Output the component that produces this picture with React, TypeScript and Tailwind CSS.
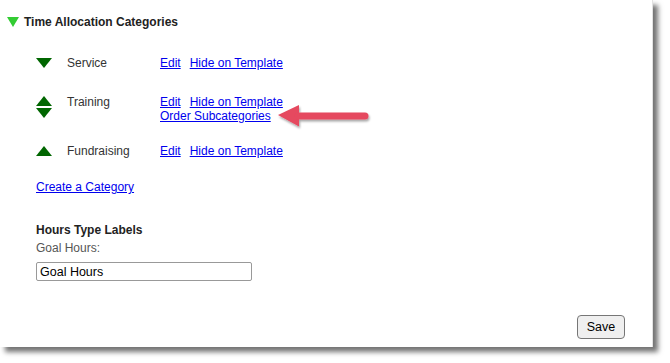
import React from 'react'

const font = { fontFamily: '"Liberation Sans", Arial, sans-serif' }

const Down = ({ color = '#006600', w = 16 }: { color?: string; w?: number }) => (
   <svg width={w} height="10" viewBox={`0 0 ${w} 10`} className="block">
      <polygon points={`0,0 ${w},0 ${w / 2},10`} fill={color} />
   </svg>
)

const Up = ({ color = '#006600' }: { color?: string }) => (
   <svg width="16" height="10" viewBox="0 0 16 10" className="block">
      <polygon points="8,0 16,10 0,10" fill={color} />
   </svg>
)

const Links = ({ extra }: { extra?: boolean }) => (
   <div className="flex flex-col leading-[14px]">
      <div className="flex gap-[9px]">
         <a href="#" className="text-[#0000ee] underline">Edit</a>
         <a href="#" className="text-[#0000ee] underline">Hide on Template</a>
      </div>
      {extra && (
         <a href="#" className="text-[#0000ee] underline">Order Subcategories</a>
      )}
   </div>
)

export default function App() {
   return (
      <div className="w-[670px] h-[363px] bg-white text-[12px]" style={font}>
         <div className="relative w-[653px] h-[347px] bg-white border-r border-[#e2e2e2] shadow-[5px_5px_5px_rgba(0,0,0,0.55)]">
            <div className="flex items-center gap-[5px] pl-[7px] pt-[15px]">
               <Down color="#33cc33" w={12} />
               <span className="font-bold text-[#222] leading-[14px]">Time Allocation Categories</span>
            </div>

            <div className="pl-[36px] pt-[27px] text-[#333]">
               <div className="flex items-start">
                  <div className="w-[31px] pt-[2px]"><Down /></div>
                  <div className="w-[93px] leading-[14px]">Service</div>
                  <Links />
               </div>
               <div className="flex items-start mt-[25px]">
                  <div className="w-[31px] pt-[1px] flex flex-col gap-[2px]">
                     <Up />
                     <Down />
                  </div>
                  <div className="w-[93px] leading-[14px]">Training</div>
                  <Links extra />
               </div>
               <div className="flex items-start mt-[21px]">
                  <div className="w-[31px] pt-[2px]"><Up /></div>
                  <div className="w-[93px] leading-[14px]">Fundraising</div>
                  <Links />
               </div>

               <a href="#" className="block mt-[22px] leading-[14px] text-[#0000ee] underline">Create a Category</a>

               <div className="mt-[29px] font-bold text-[#222] leading-[14px]">Hours Type Labels</div>
               <div className="mt-[4px] text-[#555] leading-[14px]">Goal Hours:</div>
               <input
                  defaultValue="Goal Hours"
                  className="mt-[7px] block w-[216px] h-[19px] border border-[#999] rounded-[2px] px-[3px] text-[12.5px] text-black outline-none"
                  style={font}
               />
            </div>

            <div className="flex justify-end pr-[27px] mt-[34px]">
               <button
                  className="w-[48px] h-[24px] rounded-[4px] border border-[#767676] bg-[#efefef] text-[12.5px] text-black"
                  style={font}
               >
                  Save
               </button>
            </div>

            <svg
               className="absolute left-[274px] top-[102px]"
               width="100"
               height="30"
               viewBox="0 0 100 30"
            >
               <defs>
                  <filter id="sh" x="-10%" y="-20%" width="130%" height="160%">
                     <feDropShadow dx="1" dy="2" stdDeviation="1.2" floodColor="#000" floodOpacity="0.35" />
                  </filter>
               </defs>
               <g filter="url(#sh)">
                  <polygon points="4,13 25,3 25,24.5" fill="#e5485f" />
                  <line x1="24" y1="14" x2="91" y2="14" stroke="#e5485f" strokeWidth="7" strokeLinecap="round" />
               </g>
            </svg>
         </div>
      </div>
   )
}
